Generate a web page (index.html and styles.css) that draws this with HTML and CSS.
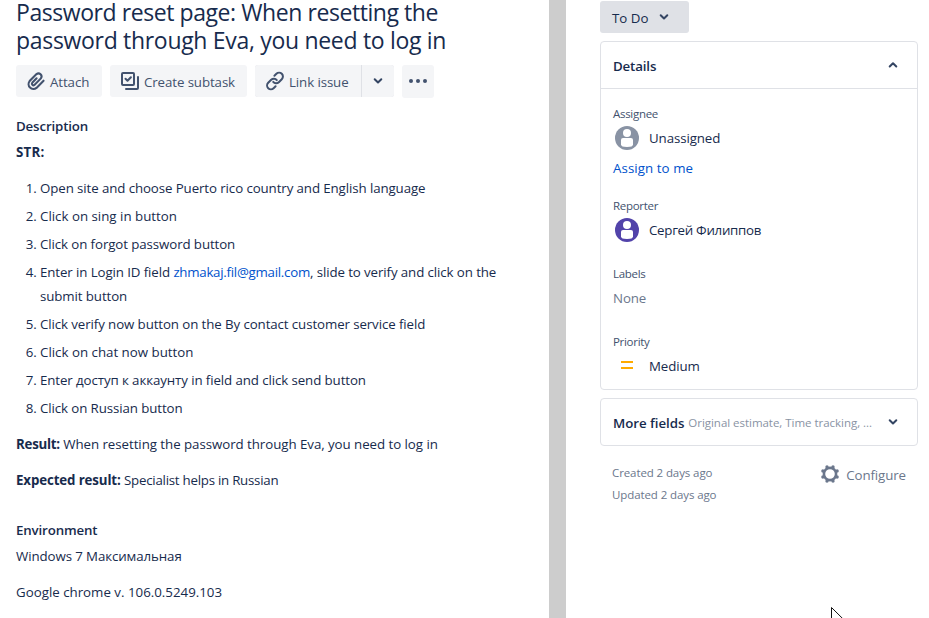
FILE: index.html
```html
<!DOCTYPE html>
<html lang="en">
<head>
<meta charset="utf-8">
<title>Issue</title>
<link rel="stylesheet" href="styles.css">
</head>
<body>
<div class="page">
  <main class="issue">
    <h1 class="title"><span class="t1">Password reset page: When resetting the</span><br><span class="t2">password through Eva, you need to log in</span></h1>
    <div class="toolbar">
      <button class="btn attach"><svg class="icon" viewBox="0 0 24 24"><path fill="none" stroke="currentColor" stroke-width="2" stroke-linecap="round" d="M12.5 8.2l-4.2 4.3a1.5 1.5 0 0 0 2.1 2.1l6.2-6.3a3 3 0 0 0-4.2-4.2L5.800 10.800a4.700 4.700 0 0 0 6.600 6.600l6.800-6.900" transform="translate(-.4 .8) scale(1.040)"/></svg><span>Attach</span></button>
      <button class="btn subtask"><svg class="icon" viewBox="0 0 24 24"><g fill="none" stroke="currentColor" stroke-width="2" stroke-linejoin="round" stroke-linecap="round"><rect x="4" y="4" width="12" height="12" rx="1"/><path d="M20 8v11a1 1 0 0 1-1 1H8M7.500 9.800l2 2 3.400-3.600"/></g></svg><span>Create subtask</span></button>
      <div class="split">
        <button class="btn link"><svg class="icon" viewBox="0 0 24 24"><g fill="none" stroke="currentColor" stroke-width="2" stroke-linecap="round"><path d="M12.600 17.200l-2 2a3.800 3.800 0 0 1-5.400-5.400l3-3a3.800 3.800 0 0 1 5.600.3"/><path d="M11.400 6.800l2-2a3.800 3.800 0 0 1 5.400 5.400l-3 3a3.800 3.800 0 0 1-5.600-.3"/></g></svg><span>Link issue</span></button>
        <button class="btn drop"><svg class="chev" viewBox="0 0 10 10"><path d="M1.700 3.200 5 6.500l3.300-3.300"/></svg></button>
      </div>
      <button class="btn more"><svg class="dots" viewBox="0 0 20 6"><circle cx="3" cy="3" r="2"/><circle cx="10" cy="3" r="2"/><circle cx="17" cy="3" r="2"/></svg></button>
    </div>
    <section class="description">
      <h2>Description</h2>
      <p><b class="str">STR:</b></p>
      <ol>
        <li><span>Open site and choose Puerto rico country and English language</span></li>
        <li><span class="wide">Click on sing in button</span></li>
        <li><span>Click on forgot password button</span></li>
        <li><span>Enter in Login ID field <a class="mail" href="#">zhmakaj.fil@gmail.com</a>, slide to verify and click on the<br>submit button</span></li>
        <li><span>Click verify now button on the By contact customer service field</span></li>
        <li><span class="wide">Click on chat now button</span></li>
        <li><span>Enter доступ к аккаунту in field and click send button</span></li>
        <li><span>Click on Russian button</span></li>
      </ol>
      <p><b class="res">Result:</b> <span class="restext">When resetting the password through Eva, you need to log in</span></p>
      <p><b class="exp">Expected result:</b> <span class="exptext">Specialist helps in Russian</span></p>
    </section>
    <section class="environment">
      <h2>Environment</h2>
      <p>Windows 7 Максимальная</p>
      <p class="wide">Google chrome v. 106.0.5249.103</p>
    </section>
  </main>
  <div class="divider"></div>
  <aside class="side">
    <button class="status"><span>To Do</span><svg class="chev" viewBox="0 0 10 10"><path d="M1.700 3.200 5 6.500l3.300-3.300"/></svg></button>
    <section class="card">
      <header class="card-head"><h2>Details</h2><svg class="chev" viewBox="0 0 10 10"><path d="M1.700 6.500 5 3.200l3.300 3.300"/></svg></header>
      <div class="fields">
        <div class="field assignee">
          <h3>Assignee</h3>
          <div class="value"><svg class="avatar gray" viewBox="0 0 24 24"><circle cx="12" cy="12" r="12"/><circle class="w" cx="12" cy="7" r="4"/><path class="w" d="M6 14q0-2 2-2h8q2 0 2 2v4.500q0 2.500-6 2.500t-6-2.500z"/></svg><span>Unassigned</span></div>
          <a class="assign" href="#">Assign to me</a>
        </div>
        <div class="field">
          <h3>Reporter</h3>
          <div class="value"><svg class="avatar purple" viewBox="0 0 24 24"><circle cx="12" cy="12" r="12"/><circle class="w" cx="12" cy="7" r="4"/><path class="w" d="M6 14q0-2 2-2h8q2 0 2 2v4.500q0 2.500-6 2.500t-6-2.500z"/></svg><span class="name">Сергей Филиппов</span></div>
        </div>
        <div class="field">
          <h3>Labels</h3>
          <div class="value none">None</div>
        </div>
        <div class="field">
          <h3>Priority</h3>
          <div class="value"><svg class="priority" viewBox="0 0 24 24"><path d="M6 7h12v2H6zM6 13h12v2H6z"/></svg><span>Medium</span></div>
        </div>
      </div>
    </section>
    <section class="card more-card"><h2>More fields</h2><span class="hint">Original estimate, Time tracking, ...</span><svg class="chev" viewBox="0 0 10 10"><path d="M1.700 3.200 5 6.500l3.300-3.300"/></svg></section>
    <footer class="meta">
      <div class="dates"><div>Created 2 days ago</div><div>Updated 2 days ago</div></div>
      <div class="configure"><svg class="gear" viewBox="0 0 18 18"><circle cx="9" cy="9" r="6.100" fill="none" stroke="currentColor" stroke-width="2.600"/><g fill="currentColor"><circle cx="6" cy="1.900" r="1.700"/><circle cx="12" cy="1.900" r="1.700"/><circle cx="16.100" cy="6" r="1.700"/><circle cx="16.100" cy="12" r="1.700"/><circle cx="12" cy="16.100" r="1.700"/><circle cx="6" cy="16.100" r="1.700"/><circle cx="1.900" cy="12" r="1.700"/><circle cx="1.900" cy="6" r="1.700"/></g></svg><span>Configure</span></div>
    </footer>
  </aside>
  <svg class="cursor" viewBox="0 0 12 19"><path d="M.5.500v16l4-3.800 2.500 5.800 2.500-1-2.500-5.600h5z" fill="#fff" stroke="#111"/></svg>
</div>
</body>
</html>
```
FILE: styles.css
```css
* { box-sizing: border-box; }
body { margin: 0; background: #fff; color: #172b4d; font: 13.3px/24px "Open Sans", "Noto Sans", sans-serif; letter-spacing: -.1px; overflow: hidden; }
h1, h2, h3, p, ol { margin: 0; font-weight: 400; }
a { color: #0052cc; text-decoration: none; }
button { border: 0; margin: 0; font: inherit; letter-spacing: inherit; color: inherit; padding: 0; }
.page { position: relative; display: flex; width: 929px; height: 618px; overflow: hidden; }
.issue { width: 549px; padding: 0 16px; white-space: nowrap; }
.title { margin-top: -2px; font-size: 23px; line-height: 28px; }
.t1 { letter-spacing: -.43px; }
.t2 { letter-spacing: -.31px; }
.toolbar { display: flex; gap: 8px; margin-top: 11px; height: 33px; align-items: flex-start; color: #42526e; }
.btn { display: flex; align-items: center; height: 32px; background: #f4f5f7; border-radius: 3px; }
.icon { width: 24px; height: 24px; flex: none; }
.attach { width: 86px; padding-left: 8px; }
.attach span, .subtask span, .link span { margin-left: 2px; padding-top: 2px; }
.subtask { width: 137px; padding-left: 8px; }
.split { display: flex; gap: 1px; background: #dfe1e6; border-radius: 3px; }
.link { width: 106px; padding-left: 8px; border-radius: 3px 0 0 3px; }
.drop { width: 32px; justify-content: center; border-radius: 0 3px 3px 0; }
.more { width: 32px; height: 33px; justify-content: center; }
.dots { width: 20px; height: 6px; fill: #42526e; margin-top: -1px; }
.chev { width: 10px; height: 10px; fill: none; stroke: #344563; stroke-width: 2; stroke-linecap: round; stroke-linejoin: round; flex: none; }
h2 { font-size: 13.3px; font-weight: 600; line-height: 20px; letter-spacing: -.15px; }
.description { margin-top: 18px; }
.description h2, .environment h2 { margin-bottom: 4px; }
p + p, ol + p { margin-top: 12px; }
b { font-weight: 700; }
.str { letter-spacing: .2px; }
.res { letter-spacing: -.25px; }
.exp { letter-spacing: -.12px; }
.restext { letter-spacing: -.05px; }
.exptext { letter-spacing: -.25px; }
.mail { letter-spacing: -.27px; }
.wide { letter-spacing: 0; }
ol { margin-top: 12px; padding-left: 24px; }
li + li { margin-top: 4px; }
.environment { margin-top: 28px; }
.divider { width: 17px; background: #cdcdcd; }
.side { width: 363px; padding: 1px 11px 0 34px; white-space: nowrap; }
.status { display: flex; align-items: center; gap: 11px; width: 89px; height: 32px; padding: 2px 0 0 12px; background: #dfe1e6; border-radius: 3px; font-weight: 500; letter-spacing: 0; }
.status .chev { margin-top: -2px; }
.card { width: 318px; margin-top: 8px; border: 1px solid #dfe1e6; border-radius: 4px; }
.card-head { display: flex; justify-content: space-between; align-items: center; height: 47px; padding: 2px 19px 0 12px; border-bottom: 1px solid #dfe1e6; }
.card-head .chev { margin-top: -2px; }
.fields { display: flex; flex-direction: column; gap: 24px; height: 300px; padding: 17px 12px 0; }
.field h3 { font-size: 11.500px; font-weight: 500; line-height: 16px; color: #42526e; letter-spacing: -.3px; }
.value { display: flex; align-items: center; height: 28px; margin-top: 2px; }
.field { height: 44px; }
.assignee { height: 68px; }
.value svg { width: 24px; height: 24px; margin: 0 10px 0 2px; flex: none; }
.gray { fill: #8993a4; }
.purple { fill: #5243aa; }
.avatar .w { fill: #fff; }
.priority { fill: #ffab00; }
.name { letter-spacing: -.28px; }
.none { color: #6b778c; }
.assign { display: block; margin-top: 4px; letter-spacing: .07px; }
.more-card { display: flex; align-items: center; height: 48px; padding: 2px 19px 0 12px; }
.more-card h2 { letter-spacing: -.05px; }
.hint { margin-left: 4px; font-size: 11.500px; color: #8993a4; letter-spacing: -.03px; }
.more-card .chev { margin: -2px 0 0 auto; }
.meta { display: flex; justify-content: space-between; margin-top: 16px; padding: 0 12px; width: 318px; color: #6b778c; }
.dates { font-size: 11.500px; line-height: 22px; letter-spacing: -.1px; }
.configure { display: flex; align-items: center; gap: 7px; height: 26px; }
.gear { width: 18px; height: 18px; margin-top: -3px; }
.cursor { position: absolute; left: 831px; top: 607px; width: 12px; height: 19px; }
```
